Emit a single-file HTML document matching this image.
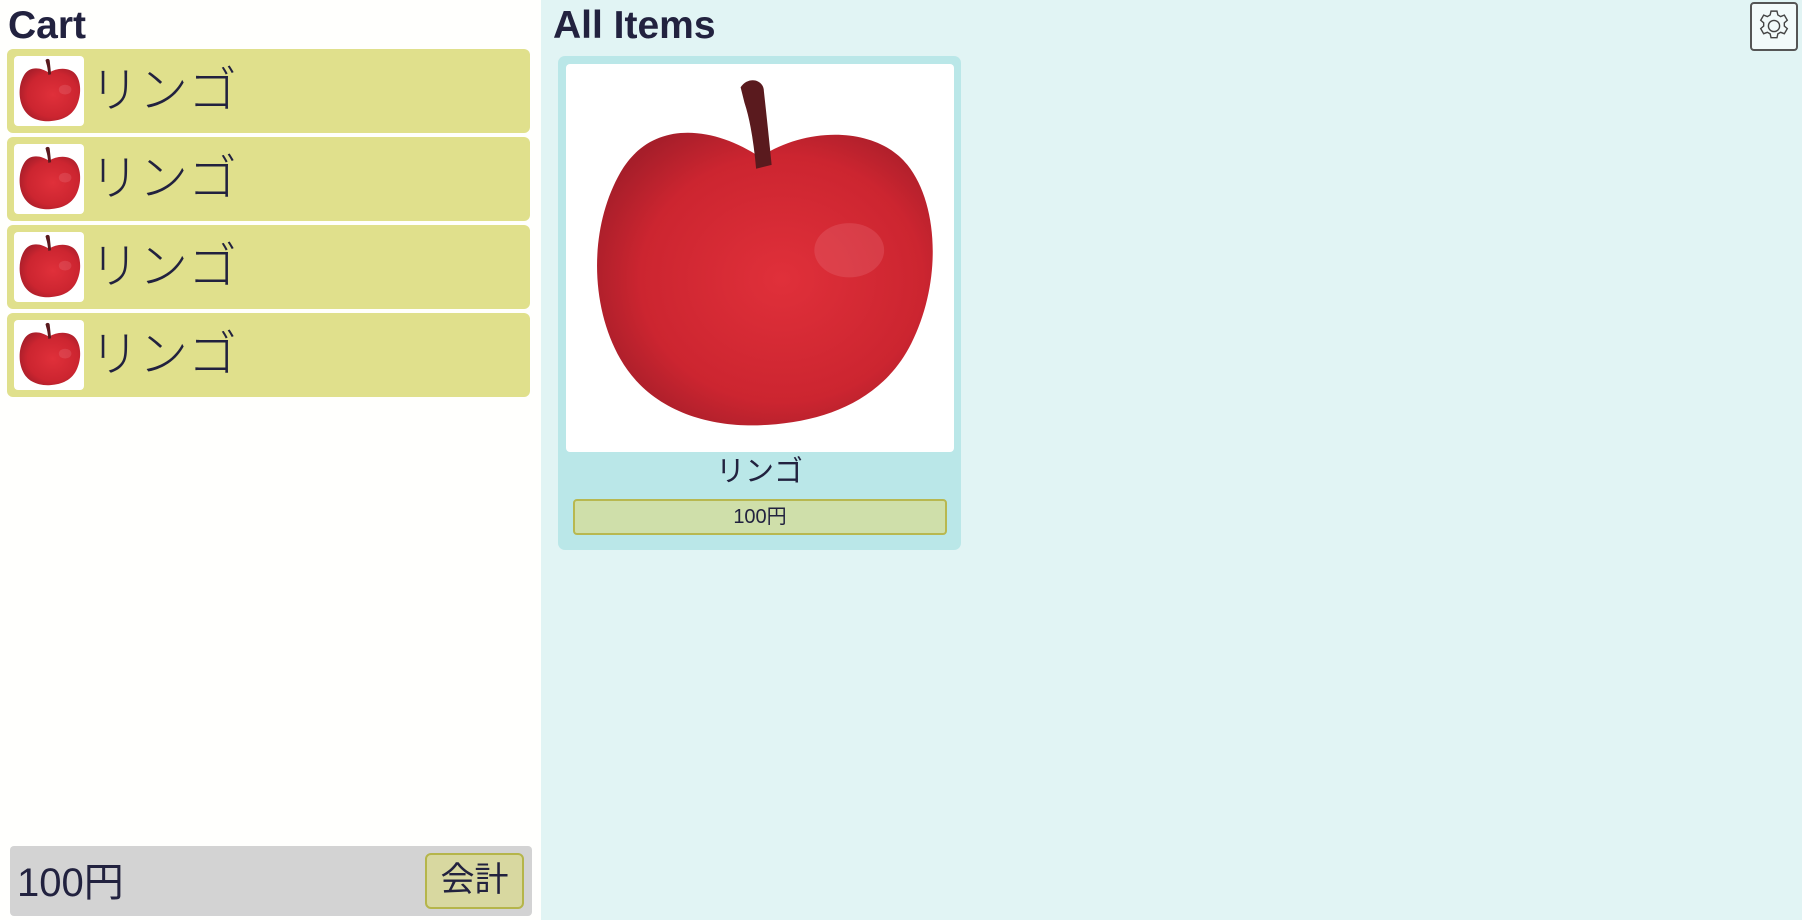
<!DOCTYPE html>
<html><head><meta charset="utf-8">
<style>
*{box-sizing:border-box;margin:0;padding:0}
body{width:1802px;height:920px;overflow:hidden;font-family:"Liberation Sans","Noto Sans CJK JP",sans-serif;color:#22223f;position:relative;background:#e1f4f4}
#left{position:absolute;left:0;top:0;width:541px;height:920px;background:#fffffd}
h1{position:absolute;font-size:39px;font-weight:bold;line-height:1;color:#22223f}
.ci{position:absolute;left:7px;width:523px;height:84px;background:#e0e08c;border-radius:6px}
.thumb{position:absolute;left:7px;top:7px;width:70px;height:70px;background:#fff;border-radius:4px}
.ci .t{position:absolute;left:83px;top:12px;font-size:49px;line-height:60px;font-weight:300}
#bar{position:absolute;left:10px;top:846px;width:522px;height:70px;background:#d3d3d3;border-radius:4px}
#bar .p{position:absolute;left:7px;top:14px;font-size:40px;line-height:46px}
#bar .b{position:absolute;left:415px;top:7px;width:99px;height:56px;background:#d8d8a0;border:2px solid #b5b54a;border-radius:6px;font-size:34px;text-align:center;line-height:50px}
#card{position:absolute;left:558px;top:56px;width:403px;height:494px;background:#bae7e8;border-radius:7px}
#img{position:absolute;left:8px;top:8px;width:388px;height:388px;background:#fff;border-radius:4px}
#card .n{position:absolute;left:0;width:100%;top:397px;text-align:center;font-size:29px;line-height:38px}
#card .pr{position:absolute;left:15px;top:443px;width:374px;height:36px;background:#cfdfaa;border:2px solid #b8b850;border-radius:4px;text-align:center;font-size:20px;line-height:32px}
#gear{position:absolute;left:1750px;top:2px;width:48px;height:49px;border:2px solid #555;border-radius:4px;background:#f2fafa}
</style></head><body>
<svg width="0" height="0" style="position:absolute"><defs>
<radialGradient id="rg" cx="55%" cy="50%" r="60%"><stop offset="0" stop-color="#e0303a"/><stop offset="0.7" stop-color="#cc2530"/><stop offset="1" stop-color="#a61e2a"/></radialGradient>
<symbol id="apple" viewBox="0 0 100 100">
<path d="M50,24 C38,16 22,14 14,28 C6,42 6,62 14,76 C22,90 38,94 52,93 C68,92 82,86 89,72 C97,56 96,36 88,26 C80,16 62,16 50,24 Z" fill="url(#rg)"/>
<ellipse cx="73" cy="48" rx="9" ry="7" fill="#e8707a" opacity="0.3"/>
<path d="M45,6 C47,3 51,4 51,7 Q52,16 53,26 L49,27 Q48,16 46,10 Z" fill="#5a1a1e"/>
</symbol></defs></svg>
<div id="left">
<h1 style="left:8px;top:6px">Cart</h1>
<div class="ci" style="top:49px"><div class="thumb"><svg width="70" height="70"><use href="#apple"/></svg></div><div class="t">リンゴ</div></div>
<div class="ci" style="top:137px"><div class="thumb"><svg width="70" height="70"><use href="#apple"/></svg></div><div class="t">リンゴ</div></div>
<div class="ci" style="top:225px"><div class="thumb"><svg width="70" height="70"><use href="#apple"/></svg></div><div class="t">リンゴ</div></div>
<div class="ci" style="top:313px"><div class="thumb"><svg width="70" height="70"><use href="#apple"/></svg></div><div class="t">リンゴ</div></div>
<div id="bar"><div class="p">100円</div><div class="b">会計</div></div>
</div>
<h1 style="left:553px;top:6px">All Items</h1>
<div id="card"><div id="img"><svg width="388" height="388"><use href="#apple"/></svg></div><div class="n">リンゴ</div><div class="pr">100円</div></div>
<div id="gear"><svg width="42" height="42" viewBox="0 0 24 24" fill="none" stroke="#444" stroke-width="0.8" style="position:absolute;left:1px;top:1px"><path d="M10.3 3.5h3.4l.5 2.2 1.6.9 2.1-.8 1.7 2.9-1.7 1.5v1.8l1.7 1.5-1.7 2.9-2.1-.8-1.6.9-.5 2.2h-3.4l-.5-2.2-1.6-.9-2.1.8-1.7-2.9 1.7-1.5v-1.8L4.4 8.7l1.7-2.9 2.1.8 1.6-.9z"/><circle cx="12" cy="12" r="3.2"/></svg></div>
</body></html>
